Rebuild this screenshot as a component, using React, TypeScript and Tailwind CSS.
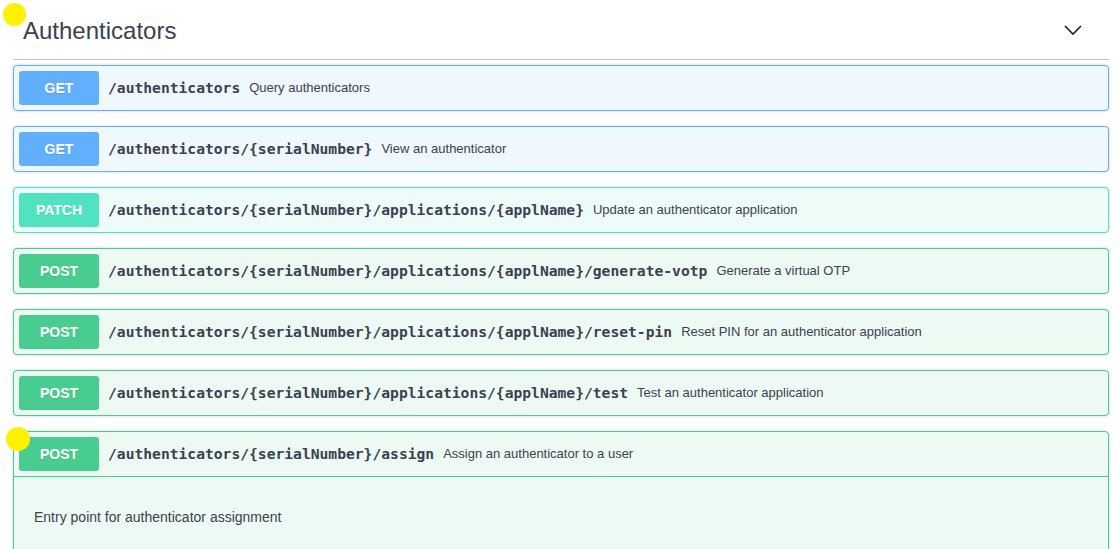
import React from "react";

type Op = { method: "GET" | "POST" | "PATCH"; path: string; summary: string };

const ops: Op[] = [
  { method: "GET", path: "/authenticators", summary: "Query authenticators" },
  { method: "GET", path: "/authenticators/{serialNumber}", summary: "View an authenticator" },
  { method: "PATCH", path: "/authenticators/{serialNumber}/applications/{applName}", summary: "Update an authenticator application" },
  { method: "POST", path: "/authenticators/{serialNumber}/applications/{applName}/generate-votp", summary: "Generate a virtual OTP" },
  { method: "POST", path: "/authenticators/{serialNumber}/applications/{applName}/reset-pin", summary: "Reset PIN for an authenticator application" },
  { method: "POST", path: "/authenticators/{serialNumber}/applications/{applName}/test", summary: "Test an authenticator application" },
];

const styles = {
  GET: { box: "border-[#61affe] bg-[#eff7ff]", badge: "bg-[#61affe]" },
  POST: { box: "border-[#49cc90] bg-[#edfaf4]", badge: "bg-[#49cc90]" },
  PATCH: { box: "border-[#50e3c2] bg-[#eefcf9]", badge: "bg-[#50e3c2]" },
};

function Summary({ op }: { op: Op }) {
  return (
    <div className="flex items-center p-[5px]">
      <div
        className={`flex h-[34px] w-[80px] shrink-0 items-center justify-center rounded-[3px] text-[14px] font-bold text-white [text-shadow:0_1px_0_rgba(0,0,0,0.1)] ${styles[op.method].badge}`}
        style={{ fontFamily: '"Liberation Sans", Arial, sans-serif' }}
      >
        {op.method}
      </div>
      <span
        className="px-[9px] text-[14.65px] font-bold text-[#3b4151] whitespace-nowrap"
        style={{ fontFamily: '"DejaVu Sans Mono", "Liberation Mono", monospace' }}
      >
        {op.path}
      </span>
      <span
        className="text-[13px] text-[#3b4151] whitespace-nowrap"
        style={{ fontFamily: '"Liberation Sans", Arial, sans-serif' }}
      >
        {op.summary}
      </span>
    </div>
  );
}

export default function App() {
  return (
    <div className="relative h-[549px] w-[1120px] overflow-hidden bg-white" style={{ fontFamily: '"Liberation Sans", Arial, sans-serif' }}>
      <div className="ml-[13px] w-[1096px]">
        <div className="flex h-[60px] items-center justify-between border-b border-[#c4c6cb] pl-[10px] pr-[26px] pt-[3px]">
          <span className="text-[24px] text-[#3b4151]">Authenticators</span>
          <svg width="20" height="20" viewBox="0 0 20 20" className="mb-[3px]">
            <polyline points="2,6 10,14 18,6" fill="none" stroke="#222" strokeWidth="1.6" />
          </svg>
        </div>
        <div className="mt-[5px] flex flex-col gap-[15px]">
          {ops.map((op, i) => (
            <div key={i} className={`rounded-[4px] border shadow-[0_0_3px_rgba(0,0,0,0.19)] ${styles[op.method].box}`}>
              <Summary op={op} />
            </div>
          ))}
          <div className={`h-[140px] rounded-[4px] border shadow-[0_0_3px_rgba(0,0,0,0.19)] ${styles.POST.box}`}>
            <div className="border-b border-[#49cc90]">
              <Summary op={{ method: "POST", path: "/authenticators/{serialNumber}/assign", summary: "Assign an authenticator to a user" }} />
            </div>
            <div className="px-[20px] py-[15px]">
              <p className="mt-[15px] text-[14px] leading-[21px] text-[#3b4151]">Entry point for authenticator assignment</p>
            </div>
          </div>
        </div>
      </div>
      <div className="absolute left-[3px] top-[3px] h-[23px] w-[23px] rounded-full bg-[#fff200]" />
      <div className="absolute left-[6px] top-[427px] h-[24px] w-[24px] rounded-full bg-[#fff200]" />
    </div>
  );
}
